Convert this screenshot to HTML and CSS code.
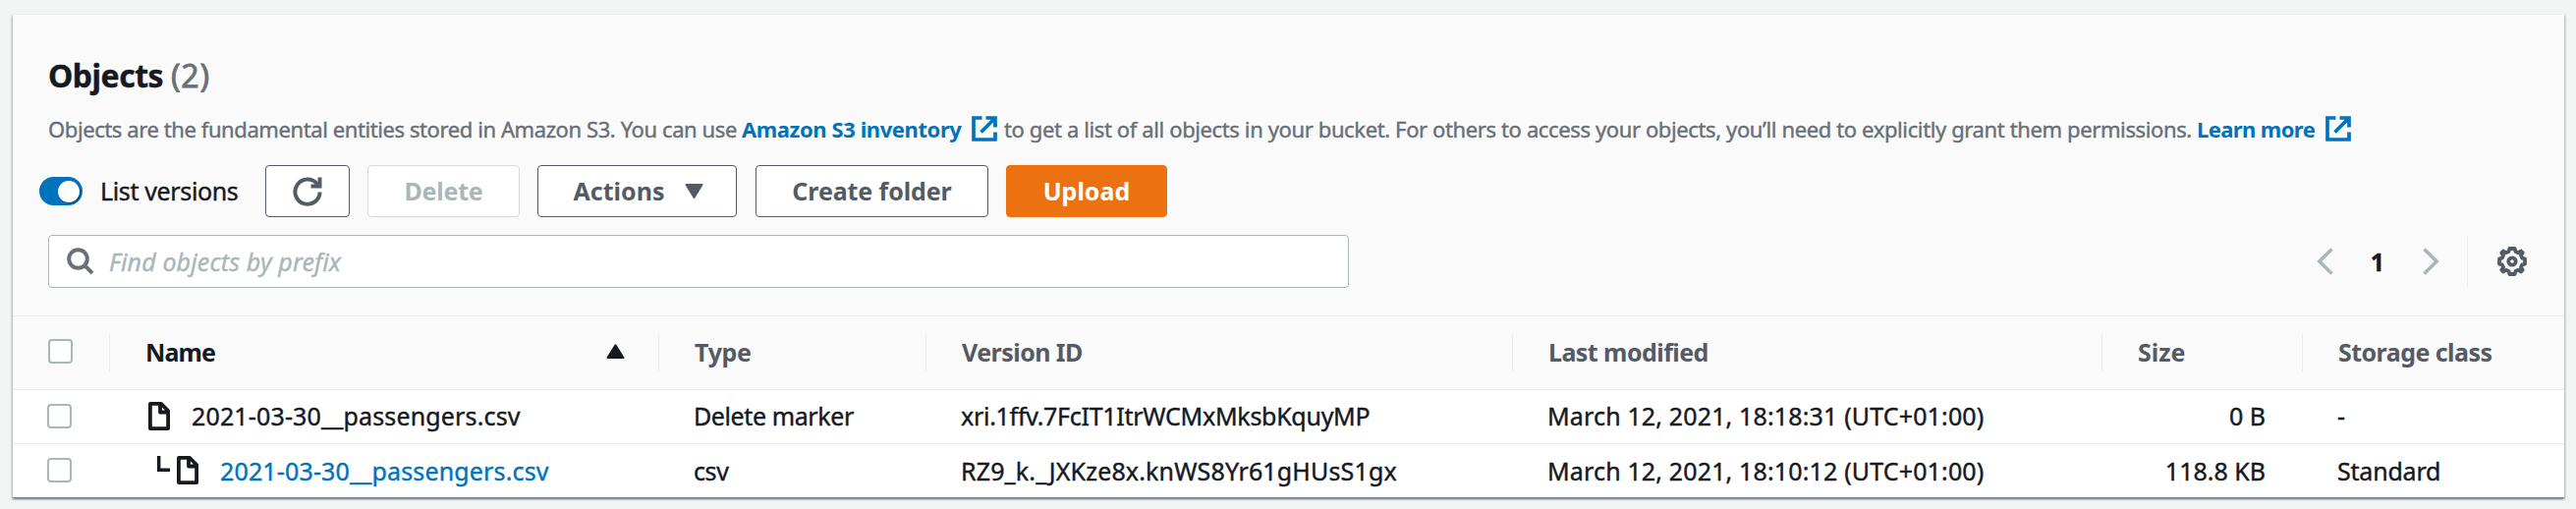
FILE: index.html
```html
<!DOCTYPE html>
<html lang="en">
<head>
<meta charset="utf-8">
<title>Objects</title>
<link rel="stylesheet" href="styles.css">
</head>
<body>
<svg class="defs" width="0" height="0" aria-hidden="true">
  <symbol id="external" viewBox="0 0 26 26">
    <path d="M10.500 2H2v22h22v-7.500M14.500 2H24v9.500M23 3L9.500 16.500" fill="none" stroke="currentColor" stroke-width="3.700"/>
  </symbol>
  <symbol id="file" viewBox="0 0 22 29">
    <path d="M1.900 1.900H13L20.100 9V27.100H1.900ZM12 2V10.500H20" fill="none" stroke="currentColor" stroke-width="3.800" stroke-linejoin="round"/>
  </symbol>
</svg>
<main class="panel">
  <header class="panel-header">
    <h1 class="title">Objects <span class="counter">(2)</span></h1>
    <p class="description">
      <span class="desc-a">Objects are the fundamental entities stored in Amazon S3. You can use</span>
      <a class="link link-inventory">Amazon S3 inventory</a>
      <svg class="external"><use href="#external"/></svg>
      <span class="desc-b">to get a list of all objects in your bucket. For others to access your objects, you’ll need to explicitly grant them permissions.</span>
      <a class="link link-more">Learn more</a>
      <svg class="external external-more"><use href="#external"/></svg>
    </p>
    <div class="actions">
      <span class="toggle"><span class="knob"></span></span>
      <span class="toggle-label">List versions</span>
      <button class="btn btn-refresh" aria-label="Refresh">
        <svg width="30" height="30" viewBox="0 0 30 30" fill="none" stroke="currentColor" stroke-width="4"><path d="M27.600 15.500A12.600 12.600 0 1 1 25 7.500L27 10"/><path d="M27.500 .6V9.500H18.500"/></svg>
      </button>
      <button class="btn btn-delete">Delete</button>
      <button class="btn btn-actions">Actions<svg width="19" height="15" viewBox="0 0 19 15"><path d="M1.500 1H17.500L9.500 14Z" fill="currentColor" stroke="currentColor" stroke-width="2" stroke-linejoin="round"/></svg></button>
      <button class="btn btn-create">Create folder</button>
      <button class="btn btn-upload">Upload</button>
    </div>
    <div class="tools">
      <div class="search">
        <svg width="28" height="28" viewBox="0 0 28 28" fill="none" stroke="currentColor" stroke-width="4"><circle cx="11.500" cy="11.500" r="9.300"/><path d="M18.200 18.200L26 26"/></svg>
        <span class="placeholder">Find objects by prefix</span>
      </div>
      <div class="pager">
        <svg width="17" height="28" viewBox="0 0 17 28" fill="none" stroke="currentColor" stroke-width="3.600"><path d="M15.500 1.500L2.800 14L15.500 26.500"/></svg>
        <span class="page">1</span>
        <svg width="17" height="28" viewBox="0 0 17 28" fill="none" stroke="currentColor" stroke-width="3.600"><path d="M1.500 1.500L14.200 14L1.500 26.500"/></svg>
      </div>
      <div class="settings">
        <svg width="30" height="30" viewBox="0 0 30 30" fill="none" stroke="currentColor" stroke-width="3.800" stroke-linejoin="round"><path d="M12.400 2H17.600L18.500 5L21.300 6.200L24 4.500L25.700 6.300L24 9L25.100 11.600L28 12.400V17.600L25.100 18.400L24 21L25.700 23.700L24 25.500L21.300 23.800L18.500 25L17.600 28H12.400L11.500 25L8.700 23.800L6 25.500L4.300 23.700L6 21L4.900 18.400L2 17.600V12.400L4.900 11.600L6 9L4.300 6.300L6 4.500L8.700 6.200L11.500 5Z"/><circle cx="15" cy="15" r="3.700"/></svg>
      </div>
    </div>
  </header>
  <section class="table">
    <div class="row head">
      <div class="cell check"><span class="box"></span></div>
      <div class="cell sorted"><span class="h-name">Name</span><svg width="19" height="15" viewBox="0 0 19 15"><path d="M1.500 14H17.500L9.500 1.300Z" fill="currentColor" stroke="currentColor" stroke-width="2" stroke-linejoin="round"/></svg></div>
      <div class="cell"><span class="h-type">Type</span></div>
      <div class="cell"><span class="tight">Version ID</span></div>
      <div class="cell"><span class="tight">Last modified</span></div>
      <div class="cell"><span>Size</span></div>
      <div class="cell"><span class="tight">Storage class</span></div>
    </div>
    <div class="row">
      <div class="cell check"><span class="box"></span></div>
      <div class="cell name"><svg class="file"><use href="#file"/></svg><span class="wide">2021-03-30__passengers.csv</span></div>
      <div class="cell"><span class="type">Delete marker</span></div>
      <div class="cell"><span class="version-a">xri.1ffv.7FcIT1ItrWCMxMksbKquyMP</span></div>
      <div class="cell"><span class="wide">March 12, 2021, 18:18:31 (UTC+01:00)</span></div>
      <div class="cell size">0 B</div>
      <div class="cell">-</div>
    </div>
    <div class="row">
      <div class="cell check"><span class="box"></span></div>
      <div class="cell name child"><svg class="branch" width="13" height="16" viewBox="0 0 13 16"><path d="M1.700 0V14.300H13" fill="none" stroke="currentColor" stroke-width="3.400"/></svg><svg class="file"><use href="#file"/></svg><a class="wide file-link">2021-03-30__passengers.csv</a></div>
      <div class="cell"><span class="type">csv</span></div>
      <div class="cell"><span class="wide">RZ9_k._JXKze8x.knWS8Yr61gHUsS1gx</span></div>
      <div class="cell"><span class="wide">March 12, 2021, 18:10:12 (UTC+01:00)</span></div>
      <div class="cell size">118.8 KB</div>
      <div class="cell"><span class="storage">Standard</span></div>
    </div>
  </section>
</main>
</body>
</html>
```
FILE: styles.css
```css
* { box-sizing: border-box; }

body {
  margin: 0;
  height: 518px;
  padding: 14px 12px 0 13px;
  overflow: hidden;
  background: #f2f3f3;
  color: #16191f;
  font: 25px/34px "Noto Sans", "Open Sans", sans-serif;
  white-space: nowrap;
  -webkit-text-stroke: .4px currentColor;
}

.defs { position: absolute; }
svg { display: block; flex: none; }

.panel {
  height: 492px;
  background: #fff;
  border-top: 1px solid #eaeded;
  box-shadow: 0 2px 2px 0 rgba(0, 28, 36, .3), 1px 2px 2px 0 rgba(0, 28, 36, .2), -1px 2px 2px 0 rgba(0, 28, 36, .2);
}

.panel-header {
  height: 307px;
  padding: 40px 36px 0;
  background: #fafafa;
  border-bottom: 1px solid #eaeded;
}

.title {
  margin: 0;
  font-size: 32px;
  line-height: 44px;
  font-weight: 700;
  letter-spacing: -.5px;
}
.counter { color: #687078; font-weight: 400; letter-spacing: .8px; -webkit-text-stroke-width: .8px; }

.description {
  display: flex;
  align-items: center;
  height: 30px;
  margin: 17px 0 22px;
  color: #687078;
  font-size: 22px;
}
.desc-a { width: 706px; letter-spacing: -.41px; }
.link { color: #0073bb; font-weight: 700; -webkit-text-stroke-width: 0; }
.link-inventory { width: 234px; letter-spacing: -.42px; }
.external { width: 26px; height: 26px; color: #0073bb; }
.desc-b { width: 1214px; margin-left: 7px; letter-spacing: -.38px; }
.link-more { width: 131px; letter-spacing: -.6px; }

.actions { display: flex; align-items: center; height: 53px; margin-left: -9px; }
.toggle {
  display: flex;
  align-items: center;
  justify-content: flex-end;
  width: 44px;
  height: 29px;
  padding-right: 3px;
  border-radius: 15px;
  background: #0073bb;
}
.knob { width: 22px; height: 22px; border-radius: 50%; background: #fff; box-shadow: 1px 1px 1px rgba(0, 28, 36, .5); }
.toggle-label { width: 168px; margin-left: 18px; padding-bottom: 1px; letter-spacing: -.36px; }

.btn {
  display: flex;
  align-items: center;
  justify-content: center;
  height: 53px;
  padding: 0 0 1px;
  border: 1px solid #545b64;
  border-radius: 4px;
  background: #fff;
  color: #545b64;
  font: 700 25px/34px "Noto Sans", "Open Sans", sans-serif;
  -webkit-text-stroke-width: 0;
}
.btn-refresh { width: 86px; padding-bottom: 0; }
.btn-delete { width: 155px; margin-left: 18px; border-color: #d5dbdb; color: #aab7b8; letter-spacing: -.2px; }
.btn-actions { width: 203px; margin-left: 18px; padding-left: 3px; gap: 21px; }
.btn-create { width: 237px; margin-left: 19px; letter-spacing: -.1px; }
.btn-upload { width: 164px; margin-left: 18px; border-color: #ec7211; background: #ec7211; color: #fff; }

.tools { display: flex; align-items: center; height: 54px; margin-top: 18px; }
.search {
  display: flex;
  align-items: center;
  gap: 15px;
  width: 1324px;
  height: 54px;
  padding-left: 18px;
  border: 1px solid #aab7b8;
  border-radius: 4px;
  background: #fff;
  color: #687078;
}
.placeholder { padding-bottom: 1px; color: #aab7b8; font-style: italic; letter-spacing: .12px; }
.pager { display: flex; align-items: center; margin-left: 985px; color: #aab7b8; }
.page { width: 91px; padding: 0 1px 1px 0; text-align: center; color: #16191f; font-weight: 700; }
.settings {
  display: flex;
  align-items: center;
  height: 53px;
  margin-left: 28px;
  padding-left: 30px;
  border-left: 1px solid #eaeded;
  color: #545b64;
}

.row {
  display: grid;
  grid-template-columns: 99px 559px 272px 597px 600px 204px 1fr;
  height: 55px;
  padding-bottom: 2px;
  border-bottom: 1px solid #eaeded;
}
.row:last-child { height: 54px; padding-bottom: 1px; border-bottom: 0; }
.cell { display: flex; align-items: center; padding-left: 35px; }

.head { height: 75px; padding-bottom: 1px; background: #fafafa; color: #545b64; font-weight: 700; align-items: center; -webkit-text-stroke-width: 0; }
.head .cell { height: 38px; padding: 0 0 2px 36px; border-right: 1px solid #eaeded; }
.head .cell:last-child { border-right: 0; }
.head .sorted { justify-content: space-between; padding-right: 34px; color: #16191f; }

.box { width: 25px; height: 25px; border: 2px solid #aab7b8; border-radius: 4px; background: #fff; }
.row:not(.head) .name { padding-left: 39px; }
.file { width: 22px; height: 29px; margin-right: 22px; }
.name .file { color: #16191f; }
.row .child.name { padding-left: 48px; }
.branch { margin: 0 7px 14px 0; }
.file-link { color: #0073bb; }
.size { justify-content: flex-end; padding-right: 38px; }

.h-name { letter-spacing: -.9px; }
.h-type { letter-spacing: -.3px; }
.tight { letter-spacing: -.55px; }
.wide { letter-spacing: .15px; }
.type { letter-spacing: -.4px; }
.version-a { letter-spacing: -.28px; }
.storage { letter-spacing: -.2px; }
```
